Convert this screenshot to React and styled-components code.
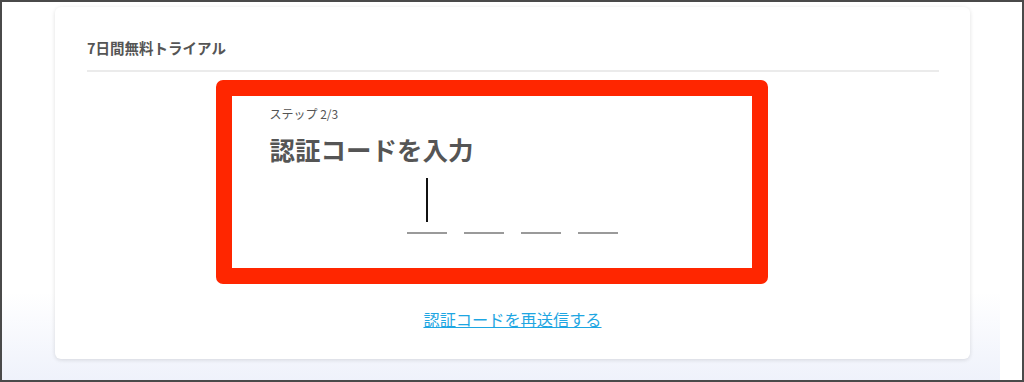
import React from 'react'
import styled, { createGlobalStyle } from 'styled-components'

const GlobalStyle = createGlobalStyle`
    html, body {
        margin: 0;
        padding: 0;
        background: #ffffff;
    }
    body {
        font-family: "Noto Sans CJK JP", "Noto Sans", sans-serif;
    }
`

const Frame = styled.div`
    box-sizing: border-box;
    width: 1024px;
    height: 382px;
    border: 2px solid #4a4a4a;
    display: flex;
    overflow: hidden;
`

const Page = styled.div`
    flex: 1;
    background: linear-gradient(to bottom, #ffffff 0, #ffffff 290px, #eff2fb 100%);
    padding: 5px 0 0 53px;
`

const Gutter = styled.div`
    width: 22px;
    background: #ffffff;
`

const Card = styled.div`
    box-sizing: border-box;
    width: 915px;
    height: 352px;
    background: #ffffff;
    border-radius: 6px;
    box-shadow: 0 1px 4px rgba(0, 0, 0, 0.13);
    padding: 31px 31px 0 31px;
    display: flex;
    flex-direction: column;
`

const Title = styled.h2`
    margin: 0 0 0 1px;
    font-size: 14.5px;
    line-height: 20px;
    font-weight: 700;
    color: #555555;
`

const Divider = styled.hr`
    margin: 12px 0 0 1px;
    border: none;
    height: 2px;
    background: #ebebeb;
`

const Form = styled.div`
    position: relative;
    box-sizing: border-box;
    width: 486px;
    align-self: center;
    margin-top: 8px;
    padding: 25px 0 50px;
    display: flex;
    flex-direction: column;
`

const Highlight = styled.div`
    position: absolute;
    top: 0;
    bottom: 0;
    left: -54px;
    right: -12px;
    border: 16px solid #ff2600;
    border-radius: 7px;
    pointer-events: none;
`

const StepLabel = styled.div`
    font-size: 12px;
    line-height: 18px;
    color: #555555;
`

const Heading = styled.h1`
    margin: 9px 0 0;
    font-size: 25.5px;
    line-height: 34px;
    font-weight: 700;
    color: #555555;
`

const CodeRow = styled.div`
    margin-top: 12px;
    display: flex;
    justify-content: center;
    gap: 17px;
`

const CodeBox = styled.div`
    box-sizing: border-box;
    width: 40px;
    height: 56px;
    border-bottom: 2px solid #9a9a9a;
    display: flex;
    justify-content: center;
`

const Caret = styled.span`
    width: 1.5px;
    height: 44px;
    background: #111111;
`

const ResendLink = styled.a`
    align-self: center;
    margin-top: 24px;
    font-size: 16.2px;
    line-height: 22px;
    color: #1ea6e2;
    text-decoration: underline;
    cursor: pointer;
`

export default function App() {
    const slots = [0, 1, 2, 3]
    return (
        <>
            <GlobalStyle />
            <Frame>
                <Page>
                    <Card>
                        <Title>7日間無料トライアル</Title>
                        <Divider />
                        <Form>
                            <Highlight />
                            <StepLabel>ステップ 2/3</StepLabel>
                            <Heading>認証コードを入力</Heading>
                            <CodeRow>
                                {slots.map((i) => (
                                    <CodeBox key={i}>{i === 0 && <Caret />}</CodeBox>
                                ))}
                            </CodeRow>
                        </Form>
                        <ResendLink>認証コードを再送信する</ResendLink>
                    </Card>
                </Page>
                <Gutter />
            </Frame>
        </>
    )
}
